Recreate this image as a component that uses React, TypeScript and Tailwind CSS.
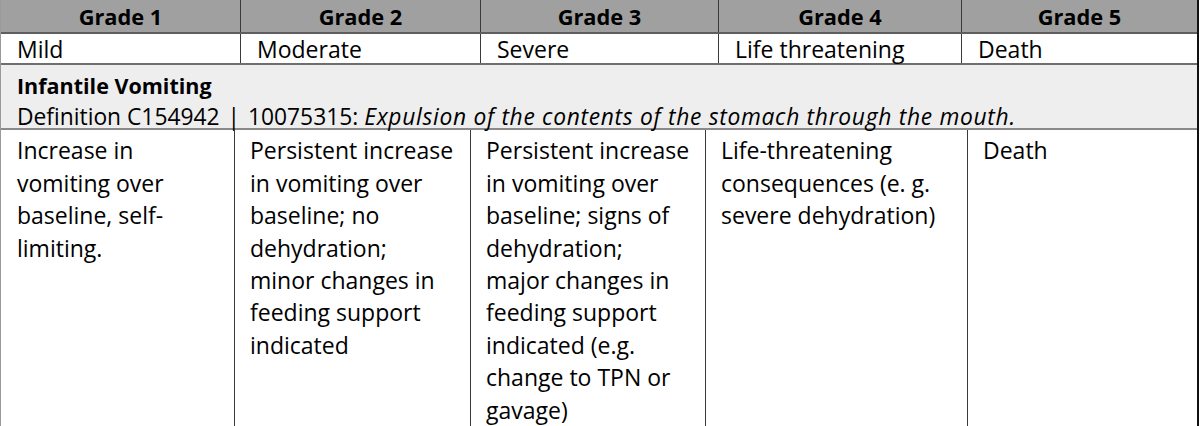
import React from "react";

const GRADES = ["Grade 1", "Grade 2", "Grade 3", "Grade 4", "Grade 5"];
const SEVERITY = ["Mild", "Moderate", "Severe", "Life threatening", "Death"];

// lines kept as in the source document so the wrapping matches
const DESCRIPTIONS = [
  ["Increase in", "vomiting over", "baseline, self-", "limiting."],
  ["Persistent increase", "in vomiting over", "baseline; no", "dehydration;", "minor changes in", "feeding support", "indicated"],
  [
    "Persistent increase",
    "in vomiting over",
    "baseline; signs of",
    "dehydration;",
    "major changes in",
    "feeding support",
    "indicated (e.g.",
    "change to TPN or",
    "gavage)",
  ],
  ["Life-threatening", "consequences (e. g.", "severe dehydration)"],
  ["Death"],
];

const topCols = "grid grid-cols-[240px_240px_238px_243px_1fr]";
const bodyCols = "grid grid-cols-[234px_236px_235px_262px_1fr]";

export default function App() {
  return (
    <div
      className="w-[1200px] h-[426px] overflow-hidden bg-white text-black"
      style={{ fontFamily: '"Open Sans", "Liberation Sans", sans-serif' }}
    >
      <div className="w-[1199px] h-full flex flex-col border-l border-[#9a9a9a] border-r-2 border-r-[#111]">
        {/* header */}
        <div className={`${topCols} h-[35px] bg-[#a0a0a0] border-b-2 border-[#5e5e5e]`}>
          {GRADES.map((g, i) => (
            <div
              key={g}
              className={`flex items-center justify-center pt-[2px] text-[21.8px] font-bold leading-none ${
                i < 4 ? "border-r border-[#3a3a3a]" : ""
              }`}
            >
              {g}
            </div>
          ))}
        </div>

        {/* severity labels */}
        <div className={`${topCols} h-[32px] border-b-2 border-[#6e6e6e]`}>
          {SEVERITY.map((s, i) => (
            <div
              key={s}
              className={`flex items-center pl-[16px] pt-[2px] text-[23px] leading-none ${
                i < 4 ? "border-r border-[#3a3a3a]" : ""
              }`}
            >
              {s}
            </div>
          ))}
        </div>

        {/* term section */}
        <div className="h-[65px] bg-[#eeeeee] border-b-2 border-[#8a8a8a] pl-[16px] pt-[6px]">
          <div className="font-bold text-[21.5px] leading-[30px]">Infantile Vomiting</div>
          <div className="text-[22.8px] leading-[32px] whitespace-nowrap">
            Definition C154942 <span className="mx-[2px]">|</span> 10075315:{" "}
            <span className="italic tracking-[0.7px]">Expulsion of the contents of the stomach through the mouth.</span>
          </div>
        </div>

        {/* descriptions */}
        <div className={`${bodyCols} flex-1`}>
          {DESCRIPTIONS.map((lines, i) => (
            <div
              key={i}
              className={`pt-[4px] text-[23px] leading-[32.4px] whitespace-nowrap ${
                i === 0 ? "pl-[16px]" : "pl-[15px]"
              } ${i < 4 ? "border-r border-[#3a3a3a]" : ""}`}
            >
              {lines.map((l) => (
                <div key={l}>{l}</div>
              ))}
            </div>
          ))}
        </div>
      </div>
    </div>
  );
}
